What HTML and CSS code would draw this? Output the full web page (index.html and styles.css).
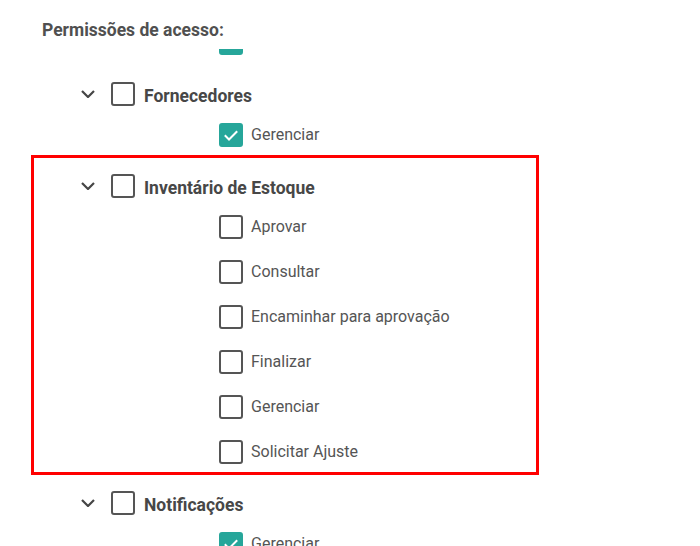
FILE: index.html
```html
<!DOCTYPE html>
<html lang="pt-BR">
<head>
<meta charset="utf-8">
<title>Permissões de acesso</title>
<link rel="stylesheet" href="styles.css">
</head>
<body>
<div class="panel">
  <div class="title">Permissões de acesso:</div>
  <div class="scroll">
    <div class="content">
      <div class="group prev">
        <div class="child"><span class="cb checked"><svg viewBox="0 0 24 24"><polyline points="5.8,12.3 10,16.5 18.2,8.2"/></svg></span><span class="label">Gerenciar</span></div>
      </div>
      <div class="group">
        <div class="header"><span class="chev"><svg viewBox="0 0 14 8"><polyline points="1,1 7,7 13,1"/></svg></span><span class="cb"></span><span class="name">Fornecedores</span></div>
        <div class="child"><span class="cb checked"><svg viewBox="0 0 24 24"><polyline points="5.8,12.3 10,16.5 18.2,8.2"/></svg></span><span class="label">Gerenciar</span></div>
      </div>
      <div class="group highlight">
        <div class="header"><span class="chev"><svg viewBox="0 0 14 8"><polyline points="1,1 7,7 13,1"/></svg></span><span class="cb"></span><span class="name">Inventário de Estoque</span></div>
        <div class="child"><span class="cb"></span><span class="label">Aprovar</span></div>
        <div class="child"><span class="cb"></span><span class="label">Consultar</span></div>
        <div class="child"><span class="cb"></span><span class="label">Encaminhar para aprovação</span></div>
        <div class="child"><span class="cb"></span><span class="label">Finalizar</span></div>
        <div class="child"><span class="cb"></span><span class="label">Gerenciar</span></div>
        <div class="child"><span class="cb"></span><span class="label">Solicitar Ajuste</span></div>
      </div>
      <div class="group">
        <div class="header"><span class="chev"><svg viewBox="0 0 14 8"><polyline points="1,1 7,7 13,1"/></svg></span><span class="cb"></span><span class="name">Notificações</span></div>
        <div class="child"><span class="cb checked"><svg viewBox="0 0 24 24"><polyline points="5.8,12.3 10,16.5 18.2,8.2"/></svg></span><span class="label">Gerenciar</span></div>
      </div>
    </div>
  </div>
</div>
</body>
</html>
```

FILE: styles.css
```css
html, body {
  margin: 0;
  padding: 0;
  background: #ffffff;
  overflow: hidden;
  height: 546px;
}
body {
  font-family: Roboto, "Liberation Sans", sans-serif;
  color: #555555;
}
.panel {
  padding-top: 18px;
}
.title {
  padding-left: 42px;
  font-size: 17.5px;
  font-weight: 700;
  line-height: 24px;
  color: #505050;
}
.scroll {
  margin-top: 7px;
  height: 497px;
  overflow: hidden;
}
.content {
  margin-top: -29px;
  padding-left: 42px;
}
.group {
  margin-bottom: 11px;
  position: relative;
}
.header {
  display: flex;
  align-items: center;
  height: 36px;
  padding-left: 39px;
}
.chev {
  width: 14px;
  height: 8px;
  display: flex;
  margin-right: 16px;
}
.chev svg {
  width: 14px;
  height: 8px;
  fill: none;
  stroke: #454545;
  stroke-width: 2.2;
}
.cb {
  box-sizing: border-box;
  width: 24px;
  height: 24px;
  border: 2px solid #555555;
  border-radius: 3px;
  flex: none;
  display: flex;
}
.cb.checked {
  background: #26a69a;
  border-color: #26a69a;
  align-items: center;
  justify-content: center;
}
.cb.checked svg {
  width: 24px;
  height: 24px;
  margin: -2px;
  fill: none;
  stroke: #ffffff;
  stroke-width: 2;
}
.name {
  margin-left: 9px;
  font-size: 17.5px;
  font-weight: 700;
  color: #474747;
  position: relative;
  top: 2px;
}
.child {
  display: flex;
  align-items: center;
  height: 45px;
  padding-left: 177px;
}
.label {
  margin-left: 8px;
  font-size: 16px;
  color: #555555;
}
.highlight::after {
  content: "";
  position: absolute;
  left: -11px;
  right: 161px;
  top: -13px;
  bottom: -1px;
  border: 3px solid #ff0000;
  pointer-events: none;
}
```
